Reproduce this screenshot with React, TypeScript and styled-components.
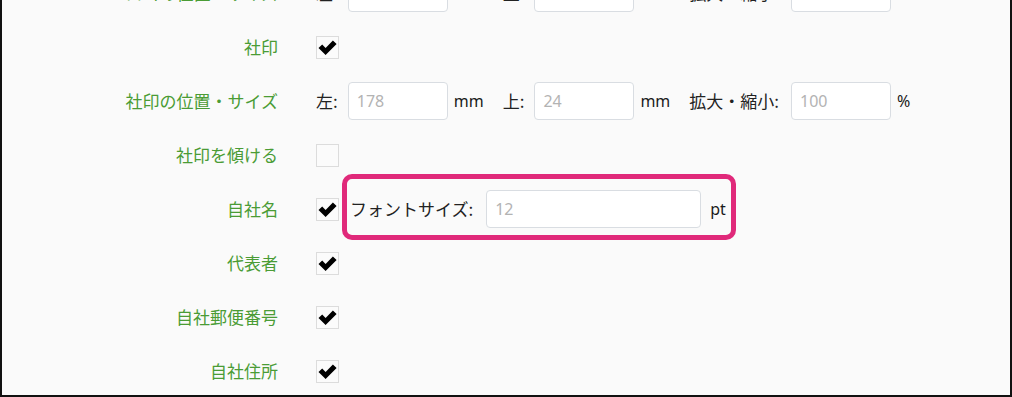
import React from 'react';
import styled, { createGlobalStyle } from 'styled-components';

const GlobalStyle = createGlobalStyle`
  html, body {
    margin: 0;
    padding: 0;
    background: #fafafa;
  }
  body {
    font-family: "Noto Sans", "Noto Sans CJK JP", sans-serif;
  }
`;

const Frame = styled.div`
  box-sizing: border-box;
  width: 1012px;
  height: 397px;
  overflow: hidden;
  background: #fafafa;
  border: 2px solid #111;
  border-top: none;
`;

const Form = styled.div`
  display: grid;
  grid-template-columns: 276px 1fr;
  grid-auto-rows: 38px;
  column-gap: 38px;
  row-gap: 16px;
  margin-top: -26px;
`;

const Label = styled.div`
  display: flex;
  align-items: center;
  justify-content: flex-end;
  height: 38px;
  font-family: "Noto Sans CJK JP", sans-serif;
  font-size: 17px;
  line-height: 20px;
  color: #4a9c35;
  white-space: nowrap;
`;

const Field = styled.div`
  display: flex;
  align-items: center;
  height: 38px;
`;

const Group = styled.div<{ $first?: boolean }>`
  display: flex;
  align-items: center;
  margin-left: ${({ $first }) => ($first ? '0' : '19px')};
`;

const Caption = styled.span<{ $gap?: number }>`
  font-family: "Noto Sans CJK JP", sans-serif;
  font-size: 17px;
  line-height: 20px;
  color: #222;
  margin-right: ${({ $gap }) => $gap ?? 10}px;
  white-space: nowrap;
`;

const Unit = styled.span<{ $gap?: number }>`
  font-family: "Noto Sans", "Noto Sans CJK JP", sans-serif;
  font-size: 16px;
  line-height: 20px;
  color: #1a1a1a;
  margin-left: ${({ $gap }) => $gap ?? 6}px;
`;

const Input = styled.input<{ $w?: number }>`
  box-sizing: border-box;
  width: ${({ $w }) => $w ?? 100}px;
  height: 38px;
  padding: 0 8px;
  border: 1px solid #d9dde2;
  border-radius: 4px;
  background: #fff;
  font-family: "Noto Sans", sans-serif;
  font-size: 16px;
  color: #b3b3b3;
  outline: none;
`;

const Box = styled.span`
  box-sizing: border-box;
  display: inline-flex;
  align-items: center;
  justify-content: center;
  width: 23px;
  height: 23px;
  border: 1px solid #dcdcdc;
  background: #fbfbfb;
  flex-shrink: 0;
`;

const Highlight = styled.div`
  position: relative;
  display: flex;
  align-items: center;
  margin-left: 11px;

  &::before {
    content: '';
    position: absolute;
    top: -16px;
    bottom: -12px;
    left: -8px;
    right: -10px;
    border: 5px solid #e0297a;
    border-radius: 10px;
    pointer-events: none;
  }
`;

const Check = ({ on }: { on: boolean }) => (
  <Box>
    {on && (
      <svg width="21" height="21" viewBox="0 0 21 21">
        <path d="M1.5 11 L5.2 7.6 L8.6 10.9 L15.9 3.6 L19.6 7.1 L8.6 17.9 Z" fill="#000" />
      </svg>
    )}
  </Box>
);

const Position = ({ left, top, scale }: { left: string; top: string; scale: string }) => (
  <Field>
    <Group $first>
      <Caption>左:</Caption>
      <Input defaultValue={left} />
      <Unit>mm</Unit>
    </Group>
    <Group>
      <Caption>上:</Caption>
      <Input defaultValue={top} />
      <Unit>mm</Unit>
    </Group>
    <Group>
      <Caption $gap={12}>拡大・縮小:</Caption>
      <Input defaultValue={scale} />
      <Unit>%</Unit>
    </Group>
  </Field>
);

export default function App() {
  return (
    <Frame>
      <GlobalStyle />
      <Form>
        <Label>ロゴの位置・サイズ</Label>
        <Position left="" top="" scale="" />

        <Label>社印</Label>
        <Field>
          <Check on />
        </Field>

        <Label>社印の位置・サイズ</Label>
        <Position left="178" top="24" scale="100" />

        <Label>社印を傾ける</Label>
        <Field>
          <Check on={false} />
        </Field>

        <Label>自社名</Label>
        <Field>
          <Check on />
          <Highlight>
            <Caption $gap={13}>フォントサイズ:</Caption>
            <Input $w={215} defaultValue="12" />
            <Unit $gap={9}>pt</Unit>
          </Highlight>
        </Field>

        <Label>代表者</Label>
        <Field>
          <Check on />
        </Field>

        <Label>自社郵便番号</Label>
        <Field>
          <Check on />
        </Field>

        <Label>自社住所</Label>
        <Field>
          <Check on />
        </Field>
      </Form>
    </Frame>
  );
}
